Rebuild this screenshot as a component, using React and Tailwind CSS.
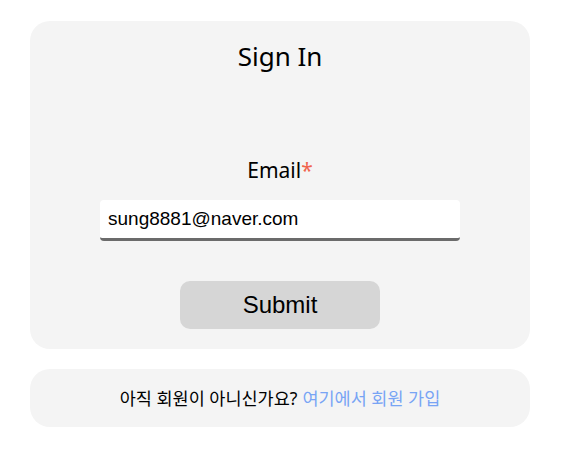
import React from "react";

export default function App() {
  return (
    <div className="w-[570px] min-h-[467px] bg-white pt-[21px] pl-[30px] flex flex-col" style={{ fontFamily: '"Noto Sans", "Noto Sans CJK KR", sans-serif' }}>
      <form className="w-[500px] h-[328px] bg-[#f4f4f4] rounded-[20px] flex flex-col items-center" onSubmit={e => e.preventDefault()}>
        <h1 className="mt-[18px] text-[26px] leading-[34px] text-black">Sign In</h1>
        <label className="mt-[83px] text-[21px] leading-[28px] text-black">
          Email<span className="text-[#f0644e]">*</span>
        </label>
        <input
          className="mt-[16px] w-[360px] h-[41px] bg-white rounded-[4px] border-b-[3px] border-[#6b6b6b] px-[8px] text-[19px] text-black outline-none"
          style={{ fontFamily: '"Liberation Sans", Arial, sans-serif' }}
          defaultValue="sung8881@naver.com"
        />
        <button
          type="submit"
          className="mt-[40px] w-[200px] h-[48px] bg-[#d6d6d6] rounded-[10px] text-[24px] text-black"
          style={{ fontFamily: '"Liberation Sans", Arial, sans-serif' }}
        >
          Submit
        </button>
      </form>
      <div className="mt-[20px] w-[500px] h-[58px] bg-[#f4f4f4] rounded-[20px] flex items-center justify-center text-[17.5px] text-black">
        <span>아직 회원이 아니신가요?</span>
        <a href="#" className="ml-[5px] text-[#78a4f4]">여기에서 회원 가입</a>
      </div>
    </div>
  );
}
